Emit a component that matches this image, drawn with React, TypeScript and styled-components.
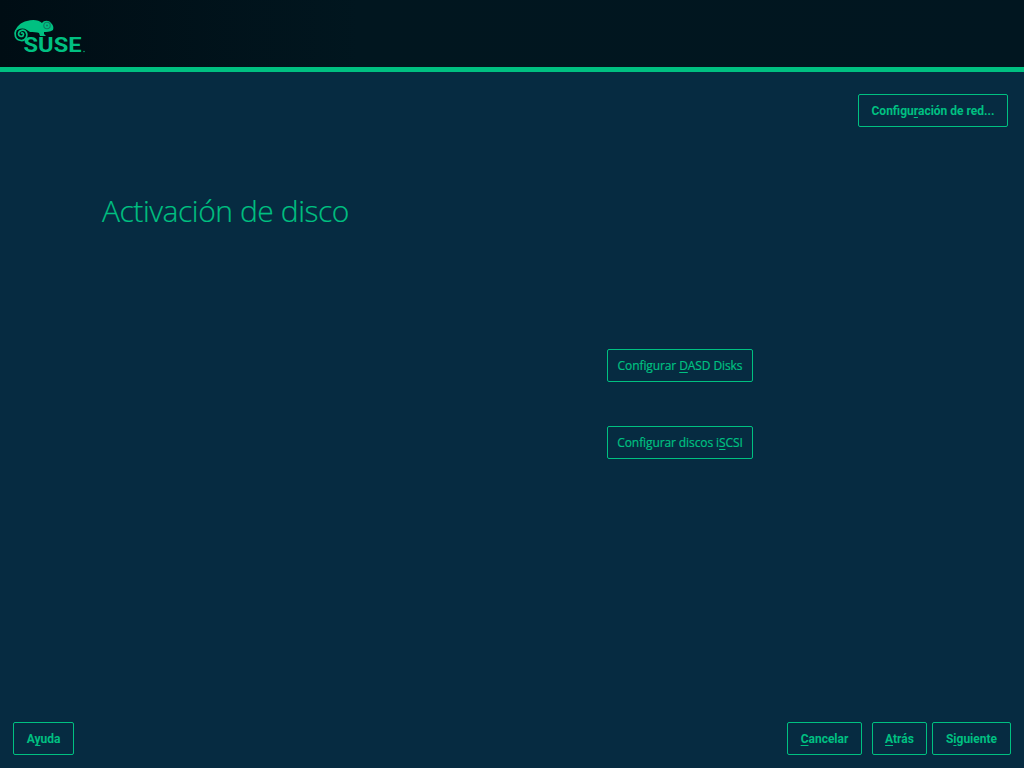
import React from "react";
import styled, { createGlobalStyle } from "styled-components";

const Global = createGlobalStyle`
  html, body { margin: 0; padding: 0; background: #062b41; }
  #root { height: 768px; }
`;

const Page = styled.div`
  width: 1024px;
  height: 768px;
  display: flex;
  flex-direction: column;
  overflow: hidden;
  background: #062b41;
  color: #00c081;
`;

const Header = styled.header`
  height: 67px;
  flex: none;
  display: flex;
  align-items: flex-start;
  padding: 17px 0 0 13px;
  box-sizing: border-box;
  background: linear-gradient(90deg, #000d14 0%, #01161f 35%, #011620 100%);
`;

const Stripe = styled.div`
  height: 5px;
  flex: none;
  background: #00c081;
`;

const Main = styled.main`
  flex: 1;
  display: flex;
  flex-direction: column;
  min-height: 0;
`;

const TopBar = styled.div`
  display: flex;
  justify-content: flex-end;
  padding: 22px 16px 0 0;
`;

const Title = styled.h1`
  margin: 63px 0 0 102px;
  height: 42px;
  font: 300 30px/42px "Open Sans", sans-serif;
  letter-spacing: -0.45px;
  color: #00c081;
  -webkit-text-stroke: 0.2px #00c081;
`;

const Center = styled.div`
  flex: 1;
  display: flex;
  flex-direction: column;
  gap: 44px;
  align-items: stretch;
  width: 146px;
  margin: 117px 0 0 607px;
`;

const Footer = styled.footer`
  display: flex;
  align-items: center;
  padding: 0 13px 13px;
  gap: 5px;
`;

const Spacer = styled.div`
  flex: 1;
`;

const Button = styled.button<{ $w?: number; $light?: boolean; $gapLeft?: number }>`
  height: 33px;
  box-sizing: border-box;
  width: ${(p) => (p.$w ? `${p.$w}px` : "100%")};
  margin-left: ${(p) => p.$gapLeft ?? 0}px;
  padding: ${(p) => (p.$light ? "0" : "1px 0 0")};
  border: 1px solid #00c081;
  border-radius: 2px;
  background: transparent;
  color: #00c081;
  font-family: ${(p) => (p.$light ? `"Open Sans", sans-serif` : `Roboto, sans-serif`)};
  font-weight: ${(p) => (p.$light ? 400 : 700)};
  font-size: 12px;
  letter-spacing: ${(p) => (p.$light ? "-0.1px" : "0")};
  -webkit-text-stroke: ${(p) => (p.$light ? "0.2px #00c081" : "0")};
  line-height: 31px;
  white-space: nowrap;
  text-align: center;
`;

const Mn = styled.span`
  text-decoration: underline;
  text-underline-offset: 2px;
  text-decoration-thickness: 1px;
`;

const LogoSvg = styled.svg`
  display: block;
`;

const Logo = () => (
  <LogoSvg width="73" height="42" viewBox="0 0 73 42" aria-label="SUSE">
    <path
      fill="#00c081"
      d="M2 15 C3 10 8 5 14 4 C20 2 26 3 29 6 C31 3 36 3 38 6 C40 8 41 10 40 13 C37 15 33 15 31 15 L31 17 L33 19 L27 19 L26 16 C24 15 20 15 17 15 L14 13 C10 10.5 5 11.5 2 15 Z"
    />
    <path
      fill="none"
      stroke="#00c081"
      strokeWidth="1.7"
      d="M3 13 C1 17 2 23 8 23.5 C13 24 15 18 13 15 C11 12 6 13 5.5 16.5 C5.5 20 10 20.5 10.5 17.5 C10.5 16 9 15.5 8 16.5"
    />
    <circle cx="34" cy="8.5" r="3.2" fill="none" stroke="#0e7a63" strokeWidth="1.1" />
    <circle cx="34" cy="8.5" r="1" fill="#0e7a63" />
    <text
      x="10.5"
      y="35"
      fontFamily="Roboto, sans-serif"
      fontWeight="700"
      fontSize="21"
      textLength="58"
      lengthAdjust="spacingAndGlyphs"
      fill="#00c081"
    >
      SUSE
    </text>
    <circle cx="71" cy="34.5" r="0.7" fill="#00c081" />
  </LogoSvg>
);

export default function App() {
  return (
    <Page>
      <Global />
      <Header>
        <Logo />
      </Header>
      <Stripe />
      <Main>
        <TopBar>
          <Button $w={150}>
            Configu<Mn>r</Mn>ación de red...
          </Button>
        </TopBar>
        <Title>Activación de disco</Title>
        <Center>
          <Button $light>
            Configurar <Mn>D</Mn>ASD Disks
          </Button>
          <Button $light>
            Configurar discos i<Mn>S</Mn>CSI
          </Button>
        </Center>
        <Footer>
          <Button $w={61}>
            A<Mn>y</Mn>uda
          </Button>
          <Spacer />
          <Button $w={75}>
            <Mn>C</Mn>ancelar
          </Button>
          <Button $w={55} $gapLeft={5}>
            <Mn>A</Mn>trás
          </Button>
          <Button $w={79}>
            S<Mn>i</Mn>guiente
          </Button>
        </Footer>
      </Main>
    </Page>
  );
}
